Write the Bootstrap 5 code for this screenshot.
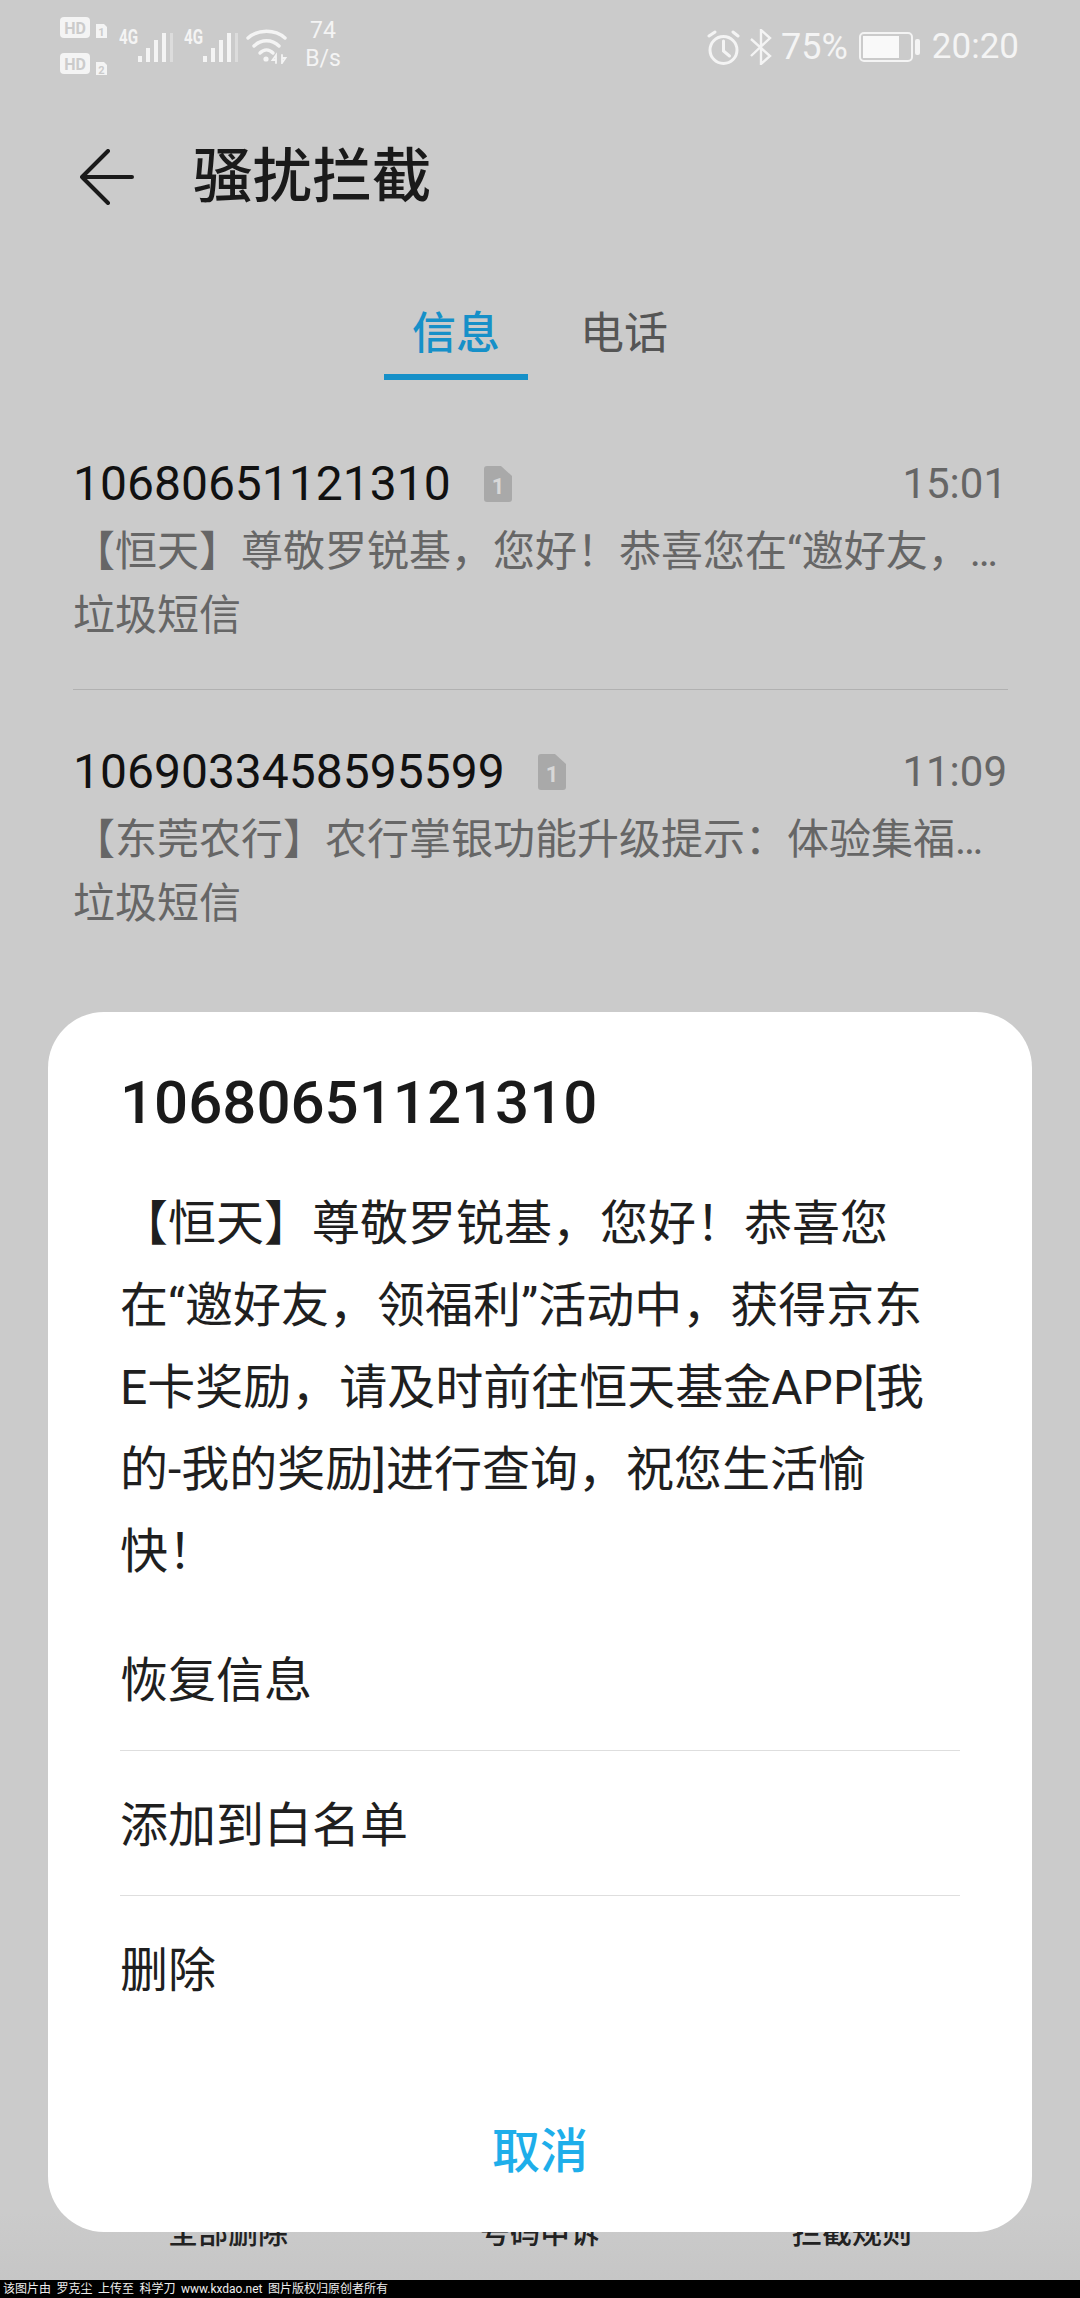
<!DOCTYPE html>
<html lang="zh-CN">
<head>
  <meta charset="UTF-8">
  <title>骚扰拦截</title>
  <link href="https://cdn.jsdelivr.net/npm/bootstrap@5.3.0/dist/css/bootstrap.min.css" rel="stylesheet">
  <style>
    html, body { margin: 0; background: #cbcbcb; }
    body { font-family: Roboto, "Noto Sans CJK SC", sans-serif; }
    .phone { width: 1080px; height: 2298px; overflow: hidden; background: #cbcbcb; }

    /* status bar */
    .status-bar { height: 88px; padding: 17px 61px 0 60px; color: #f4f4f4; }
    .status-bar svg { display: block; flex: none; }
    .status-right { font-weight: 400; font-size: 36px; line-height: 40px; height: 48px; padding-top: 10px; }
    .status-pct { margin: 0 11px 0 8px; }
    .status-time { margin-left: 12px; font-size: 35px; }
    .speed { width: 36px; margin-left: 17px; font-size: 23px; line-height: 28px; font-weight: 400; text-align: center; white-space: nowrap; }
    .sig-one { margin-left: 11px; }
    .sig-two { margin-left: 10px; }
    .wifi-ico { margin: 11px 0 0 7px; }
    .alarm-ico { margin-top: 3px; }
    .bt-ico { margin: 2px 0 0 9px; }
    .batt-ico { margin-top: 5px; }

    /* header + tabs */
    .title-row { height: 176px; padding: 2px 0 0 80px; }
    .title-row svg { margin-right: 59px; }
    .page-title { font-size: 59.6px; line-height: 80px; font-weight: 500; color: #1a1a1a; margin: 0; }
    .tab-row { height: 107px; margin-left: 384px; margin-top: 30px; }
    .tab-item { font-size: 44px; line-height: 60px; color: #555; padding: 10px 0 0; }
    .tab-item.active-tab { width: 144px; height: 86px; margin-right: 52px; text-align: center; color: #1690c8; font-weight: 500; border-bottom: 6px solid #1690c8; }

    /* message list */
    .msg-list { padding: 1px 72px 0 73px; }
    .msg-item { height: 288px; padding: 52px 0 0; border: 0; border-bottom: 2px solid #b1b1b1; background: transparent; border-radius: 0; }
    .msg-num { font-size: 48px; line-height: 60px; color: #111; }
    .msg-time { font-size: 42px; line-height: 60px; color: #666; padding-right: 1px; }
    .msg-sim { margin-left: 32px; }
    .msg-text { font-size: 42px; line-height: 62px; color: #666; margin-top: 7px; }
    .msg-tag { font-size: 42px; line-height: 60px; color: #666; margin-top: 3px; }

    /* bottom toolbar behind the dialog */
    .tool-row { padding: 0 72px 27px; font-size: 30px; line-height: 40px; font-weight: 500; color: #222; background: linear-gradient(#cbcbcb, #c6c6c6); }
    .copy-band { height: 18px; background: #000; color: #eee; font-size: 12px; line-height: 18px; padding-left: 3px; white-space: pre; word-spacing: 2.5px; }

    /* dialog */
    .sheet { left: 48px; right: 48px; top: 1012px; bottom: 66px; background: #fff; border-radius: 56px; padding: 61px 72px 50px 72px; }
    .sheet-title { font-size: 60px; line-height: 60px; font-weight: 500; color: #1a1a1a; margin: 0 0 50px; }
    .sheet-body { width: 808px; font-size: 48px; line-height: 82px; color: #1f1f1f; margin: 0 0 13px; }
    .sheet-action { height: 145px; padding: 5px 0 0; border: 0; border-bottom: 2px solid #dedede; background: transparent; font-size: 48px; color: #1f1f1f; border-radius: 0; }
    .sheet-action:last-child { border-bottom: 0; }
    .sheet-cancel { font-size: 48px; line-height: 60px; font-weight: 500; color: #1eaeea; }
  </style>
</head>
<body>
  <div class="phone position-relative d-flex flex-column">

    <!-- Status bar -->
    <div class="status-bar d-flex justify-content-between align-items-start">
      <div class="d-flex align-items-start">
        <svg width="48" height="58" viewBox="0 0 48 58">
          <rect x="0" y="0" width="30" height="21" rx="4" fill="#f4f4f4"/>
          <text x="15" y="16.5" font-size="16" font-weight="700" font-family="Roboto" text-anchor="middle" fill="#cbcbcb">HD</text>
          <path d="M36 7h8l3 3v11H36z" fill="#f4f4f4"/>
          <text x="41.5" y="19" font-size="11" font-weight="700" font-family="Roboto" text-anchor="middle" fill="#cbcbcb">1</text>
          <rect x="0" y="36" width="30" height="21" rx="4" fill="#f4f4f4"/>
          <text x="15" y="52.5" font-size="16" font-weight="700" font-family="Roboto" text-anchor="middle" fill="#cbcbcb">HD</text>
          <path d="M36 45h8l3 3v10H36z" fill="#f4f4f4"/>
          <text x="41.5" y="56.5" font-size="11" font-weight="700" font-family="Roboto" text-anchor="middle" fill="#cbcbcb">2</text>
        </svg>
        <svg class="sig-one" width="55" height="48" viewBox="0 0 55 48">
          <text x="0" y="27" font-size="20" font-weight="700" font-family="Roboto" fill="#f4f4f4" textLength="19" lengthAdjust="spacingAndGlyphs">4G</text>
          <rect x="19" y="39" width="4" height="6" fill="#f4f4f4"/>
          <rect x="27" y="31" width="4" height="14" fill="#f4f4f4"/>
          <rect x="35" y="23" width="4" height="22" fill="#f4f4f4"/>
          <rect x="43" y="16" width="4" height="29" fill="#f4f4f4"/>
          <rect x="51" y="16" width="3" height="29" fill="#dcdcdc"/>
        </svg>
        <svg class="sig-two" width="55" height="48" viewBox="0 0 55 48">
          <text x="0" y="27" font-size="20" font-weight="700" font-family="Roboto" fill="#f4f4f4" textLength="19" lengthAdjust="spacingAndGlyphs">4G</text>
          <rect x="19" y="39" width="4" height="6" fill="#f4f4f4"/>
          <rect x="27" y="31" width="4" height="14" fill="#f4f4f4"/>
          <rect x="35" y="23" width="4" height="22" fill="#f4f4f4"/>
          <rect x="43" y="16" width="4" height="29" fill="#f4f4f4"/>
          <rect x="51" y="16" width="3" height="29" fill="#dcdcdc"/>
        </svg>
        <svg class="wifi-ico" width="42" height="36" viewBox="0 0 42 36" fill="none" stroke="#f4f4f4" stroke-width="3.4" stroke-linecap="round">
          <path d="M2 10C12 1 29 1 39 10"/>
          <path d="M8 18C15 11 26 11 33 18"/>
          <path d="M14 25C18 21 23 21 27 25"/>
          <circle cx="20" cy="31" r="2.6" fill="#f4f4f4" stroke="none"/>
          <path d="M30 35V27l-3.5 5h3.5M36 27v8l3.5-5H36" stroke-width="1.8"/>
        </svg>
        <div class="speed">74<br>B/s</div>
      </div>
      <div class="status-right d-flex align-items-start">
        <svg class="alarm-ico" width="33" height="36" viewBox="0 0 33 36" fill="none" stroke="#f4f4f4" stroke-width="3" stroke-linecap="round">
          <circle cx="16.5" cy="20" r="13.5"/>
          <path d="M16.5 11v10l6 5"/>
          <path d="M2 6l6-4M31 6l-5-4"/>
        </svg>
        <svg class="bt-ico" width="24" height="36" viewBox="0 0 24 36" fill="none" stroke="#f4f4f4" stroke-width="2.4">
          <path d="M2 10l19 17-9 8V1l9 8L2 27"/>
        </svg>
        <span class="status-pct">75%</span>
        <svg class="batt-ico" width="61" height="30" viewBox="0 0 61 30">
          <rect x="1" y="1" width="52" height="28" rx="4" fill="none" stroke="#f4f4f4" stroke-width="2"/>
          <rect x="4" y="4" width="36" height="22" fill="#f9f9f9"/>
          <rect x="56" y="7" width="5" height="16" rx="2" fill="#f4f4f4"/>
        </svg>
        <span class="status-time">20:20</span>
      </div>
    </div>

    <!-- Header -->
    <div class="title-row d-flex align-items-center">
      <svg width="54" height="56" viewBox="0 0 54 56" fill="none" stroke="#1a1a1a" stroke-width="4" stroke-linecap="round" stroke-linejoin="round">
        <path d="M28 2L2 28l26 26M2 28h50"/>
      </svg>
      <h1 class="page-title">骚扰拦截</h1>
    </div>

    <!-- Tabs -->
    <div class="tab-row d-flex align-items-start">
      <div class="tab-item active-tab">信息</div>
      <div class="tab-item">电话</div>
    </div>

    <!-- Blocked messages -->
    <div class="msg-list list-group list-group-flush">
      <div class="msg-item list-group-item">
        <div class="d-flex justify-content-between">
          <div class="d-flex align-items-center">
            <span class="msg-num">10680651121310</span>
            <svg class="msg-sim" width="30" height="38" viewBox="0 0 30 38">
              <path d="M4 1h14l11 10v23a3 3 0 0 1-3 3H4a3 3 0 0 1-3-3V4a3 3 0 0 1 3-3z" fill="#a9a9a9"/>
              <text x="15" y="29" font-size="22" font-weight="700" font-family="Roboto" text-anchor="middle" fill="#d8d8d8">1</text>
            </svg>
          </div>
          <span class="msg-time">15:01</span>
        </div>
        <div class="msg-text text-truncate">【恒天】尊敬罗锐基，您好！恭喜您在“邀好友，领福利”活动中，获得京东E卡奖励</div>
        <div class="msg-tag">垃圾短信</div>
      </div>
      <div class="msg-item list-group-item">
        <div class="d-flex justify-content-between">
          <div class="d-flex align-items-center">
            <span class="msg-num">1069033458595599</span>
            <svg class="msg-sim" width="30" height="38" viewBox="0 0 30 38">
              <path d="M4 1h14l11 10v23a3 3 0 0 1-3 3H4a3 3 0 0 1-3-3V4a3 3 0 0 1 3-3z" fill="#a9a9a9"/>
              <text x="15" y="29" font-size="22" font-weight="700" font-family="Roboto" text-anchor="middle" fill="#d8d8d8">1</text>
            </svg>
          </div>
          <span class="msg-time">11:09</span>
        </div>
        <div class="msg-text text-truncate">【东莞农行】农行掌银功能升级提示：体验集福卡活动</div>
        <div class="msg-tag">垃圾短信</div>
      </div>
    </div>

    <!-- Bottom toolbar, mostly covered by the dialog -->
    <div class="tool-row row g-0 mt-auto text-center">
      <div class="col-4">全部删除</div>
      <div class="col-4">号码申诉</div>
      <div class="col-4">拦截规则</div>
    </div>
    <div class="copy-band">该图片由 罗克尘 上传至 科学刀 www.kxdao.net 图片版权归原创者所有</div>

    <!-- Dialog -->
    <div class="sheet position-absolute d-flex flex-column">
      <h2 class="sheet-title">10680651121310</h2>
      <p class="sheet-body">【恒天】尊敬罗锐基，您好！恭喜您在“邀好友，领福利”活动中，获得京东E卡奖励，请及时前往恒天基金APP[我的-我的奖励]进行查询，祝您生活愉快！</p>
      <div class="list-group list-group-flush">
        <div class="sheet-action list-group-item d-flex align-items-center">恢复信息</div>
        <div class="sheet-action list-group-item d-flex align-items-center">添加到白名单</div>
        <div class="sheet-action list-group-item d-flex align-items-center">删除</div>
      </div>
      <div class="sheet-cancel mt-auto text-center">取消</div>
    </div>

  </div>
  <script src="https://cdn.jsdelivr.net/npm/bootstrap@5.3.0/dist/js/bootstrap.bundle.min.js"></script>
</body>
</html>
